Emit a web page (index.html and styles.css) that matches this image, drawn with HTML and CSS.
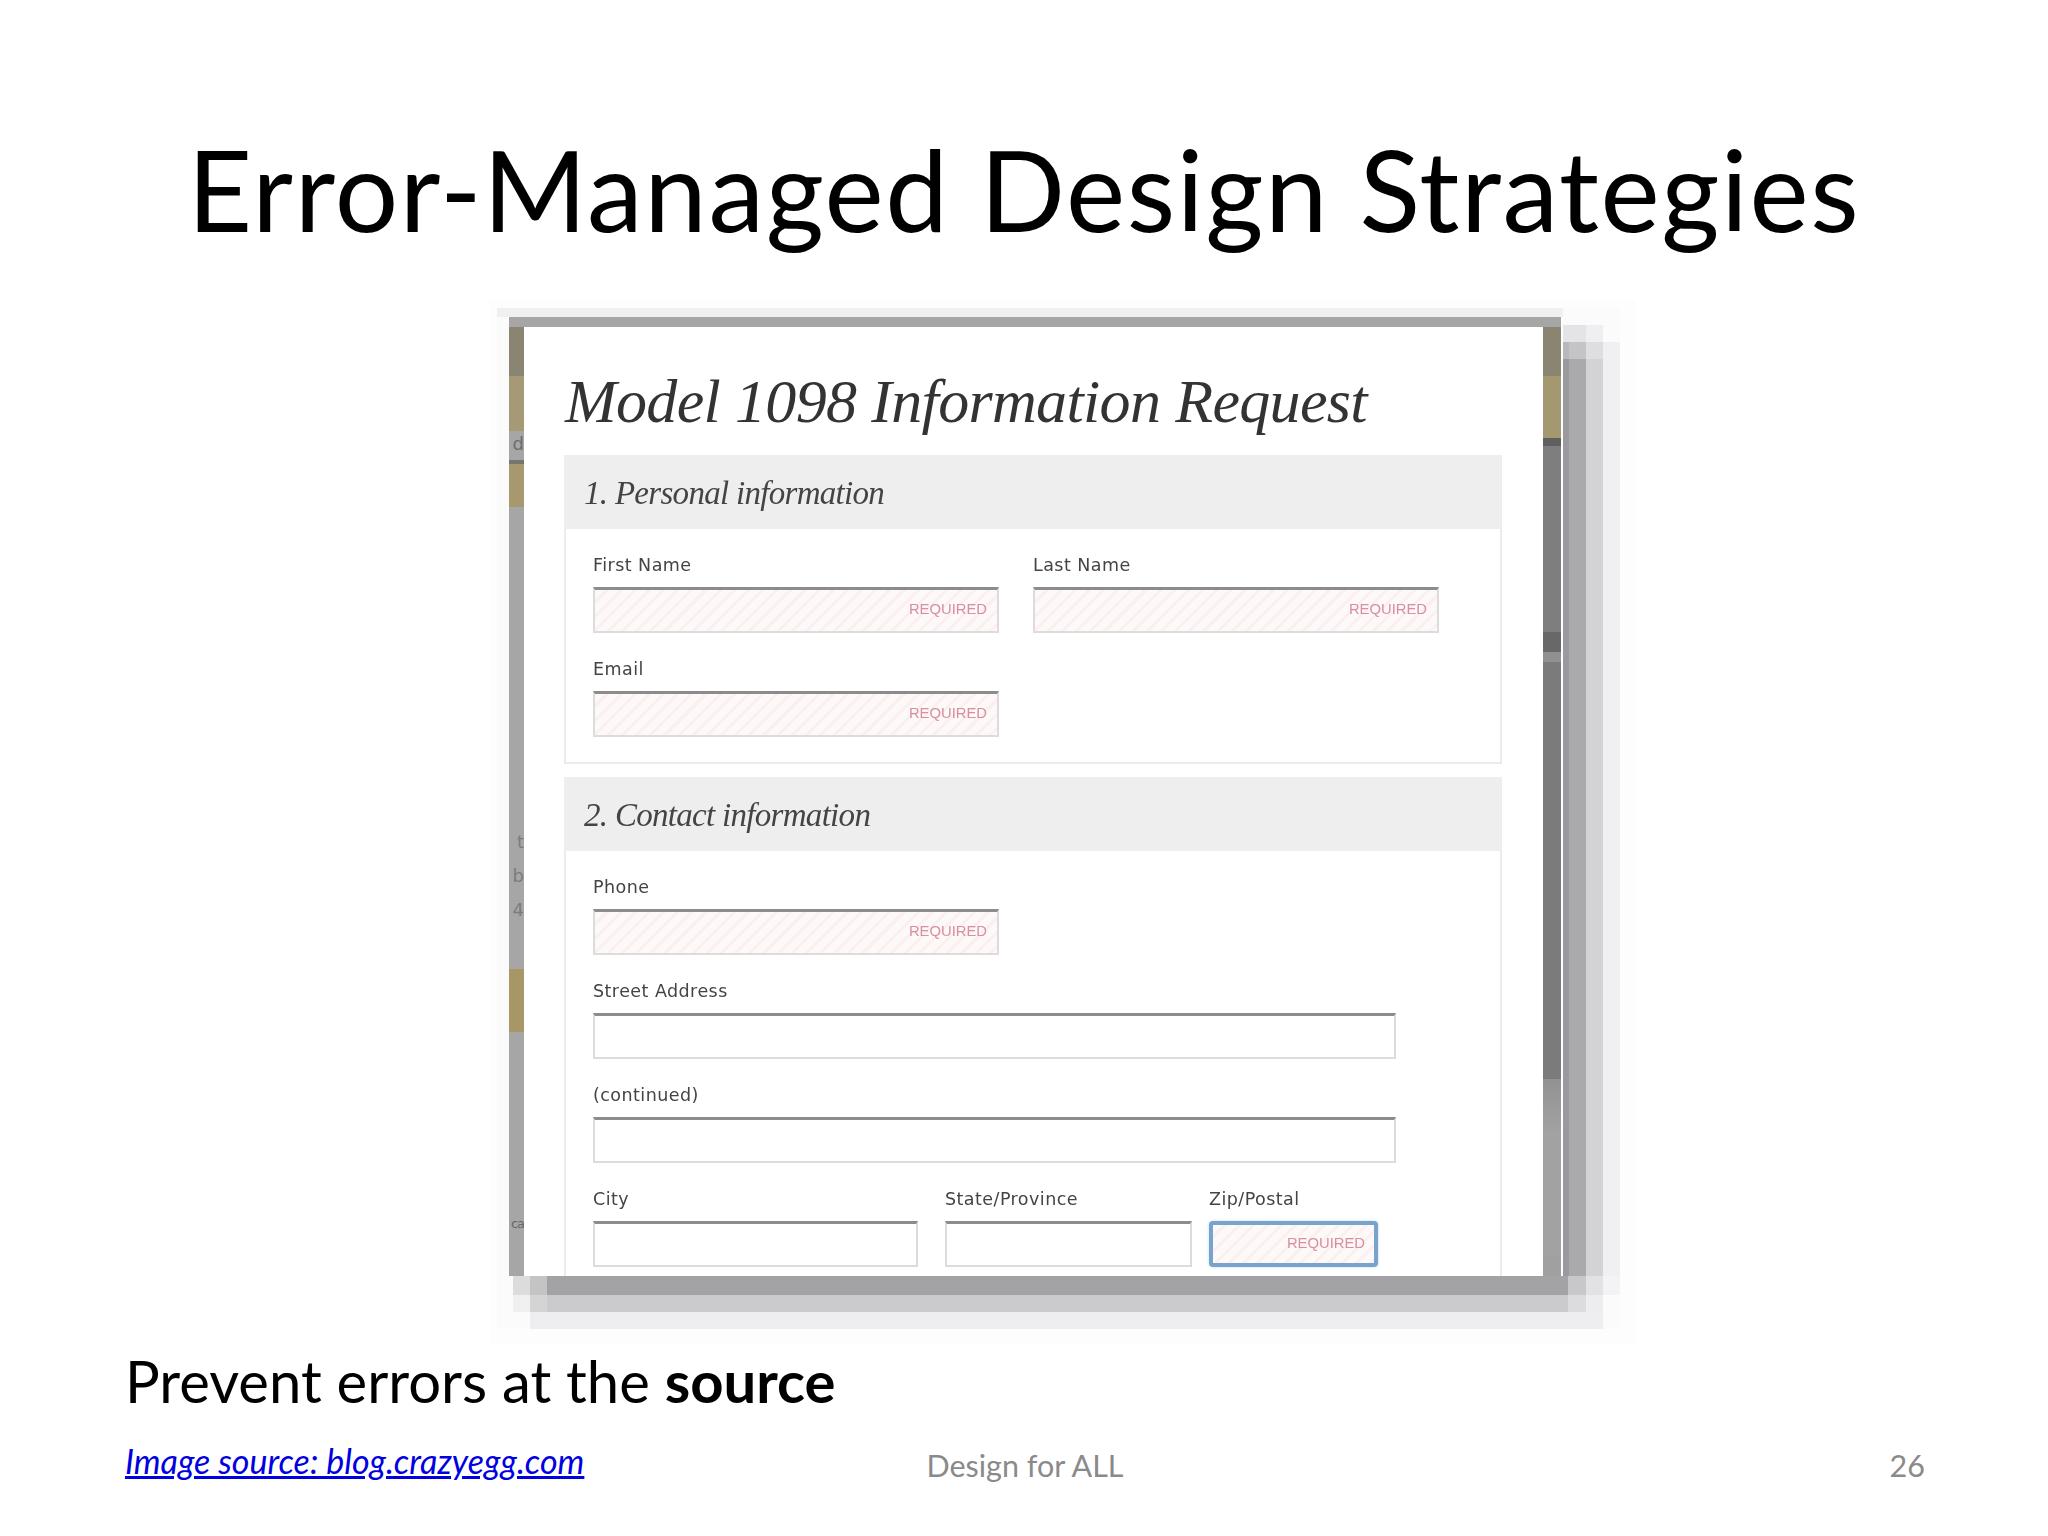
FILE: index.html
```html
<!DOCTYPE html>
<html lang="en">
<head>
<meta charset="utf-8">
<title>Error-Managed Design Strategies</title>
<link rel="stylesheet" href="styles.css">
</head>
<body>
<main class="slide">
  <h1 class="slide-title">Error-Managed Design Strategies</h1>
  <div class="shot">
    <svg class="shot-shadow" viewBox="480 290 1170 1070" width="1170" height="1070" aria-hidden="true">
      <rect x="490" y="300" width="1146" height="1045" fill="#fdfdfe"/>
      <rect x="497" y="308" width="1123" height="1021" fill="#fbfbfc"/>
      <rect x="497" y="308" width="1066" height="9" fill="#f0f0f1"/>
      <rect x="513" y="1276" width="1090" height="36" fill="#f0f0f1"/>
      <rect x="513" y="1276" width="17" height="19" fill="#dcdcdd"/>
      <rect x="530" y="1276" width="17" height="19" fill="#c4c4c5"/>
      <rect x="530" y="1295" width="17" height="17" fill="#d4d4d5"/>
      <rect x="530" y="1312" width="1073" height="17" fill="#eeeef0"/>
      <rect x="547" y="1295" width="1021" height="17" fill="#cbcbcd"/>
      <rect x="547" y="1276" width="1021" height="19" fill="#a3a3a5"/>
      <rect x="1568" y="1295" width="18" height="17" fill="#dcdcde"/>
      <rect x="1586" y="1295" width="17" height="17" fill="#ededef"/>
      <rect x="1568" y="1276" width="18" height="19" fill="#c8c8ca"/>
      <rect x="1586" y="1276" width="17" height="19" fill="#e2e2e4"/>
      <rect x="1603" y="1276" width="17" height="19" fill="#f3f3f5"/>
      <rect x="1603" y="342" width="17" height="934" fill="#f0f0f2"/>
      <rect x="1586" y="359" width="17" height="917" fill="#d3d3d6"/>
      <rect x="1569" y="359" width="17" height="917" fill="#aaaaad"/>
      <rect x="1563" y="359" width="6" height="917" fill="#9a9a9e"/>
      <rect x="1563" y="325" width="23" height="17" fill="#e4e4e6"/>
      <rect x="1586" y="325" width="17" height="17" fill="#efeff1"/>
      <rect x="1563" y="342" width="6" height="17" fill="#b8b8ba"/>
      <rect x="1569" y="342" width="17" height="17" fill="#c4c4c6"/>
      <rect x="1586" y="342" width="17" height="17" fill="#dedee0"/>
      <rect x="1561" y="317" width="2" height="959" fill="#ffffff"/>
    </svg>
    <div class="shot-frame">
      <div class="shot-top"></div>
      <div class="shot-row">
        <div class="strip">
          <div class="seg seg-olive"></div>
          <div class="seg seg-tan"></div>
          <div class="seg seg-d">d</div>
          <div class="seg seg-rule"></div>
          <div class="seg seg-gold"></div>
          <div class="seg seg-letters"><span>t</span><span>b</span><span>4</span></div>
          <div class="seg seg-gold2"></div>
          <div class="seg seg-ca">ca</div>
        </div>
        <div class="form">
          <h2 class="form-title">Model 1098 Information Request</h2>
          <section class="group">
            <h3 class="group-head">1. Personal information</h3>
            <div class="group-body">
              <div class="fields">
                <div class="field"><span class="label">First Name</span><div class="input input-req input-half"><span>REQUIRED</span></div></div>
                <div class="field"><span class="label">Last Name</span><div class="input input-req input-half"><span>REQUIRED</span></div></div>
              </div>
              <div class="field"><span class="label">Email</span><div class="input input-req input-half"><span>REQUIRED</span></div></div>
            </div>
          </section>
          <section class="group group-open">
            <h3 class="group-head">2. Contact information</h3>
            <div class="group-body">
              <div class="field"><span class="label">Phone</span><div class="input input-req input-half"><span>REQUIRED</span></div></div>
              <div class="field"><span class="label">Street Address</span><div class="input input-full"></div></div>
              <div class="field"><span class="label">(continued)</span><div class="input input-full"></div></div>
              <div class="fields fields-city">
                <div class="field"><span class="label">City</span><div class="input input-city"></div></div>
                <div class="field"><span class="label">State/Province</span><div class="input input-state"></div></div>
                <div class="field"><span class="label">Zip/Postal</span><div class="input input-req input-zip"><span>REQUIRED</span></div></div>
              </div>
            </div>
          </section>
        </div>
        <div class="strip strip-right">
          <div class="seg seg-olive"></div>
          <div class="seg seg-tan-r"></div>
          <div class="seg seg-dark"></div>
          <div class="seg seg-mid"></div>
          <div class="seg seg-dark2"></div>
          <div class="seg seg-light"></div>
          <div class="seg seg-mid2"></div>
          <div class="seg seg-low"></div>
        </div>
      </div>
    </div>
  </div>
  <p class="caption">Prevent errors at the <strong>source</strong></p>
  <footer class="foot">
    <a class="foot-source" href="#">Image source: blog.crazyegg.com</a>
    <span class="foot-center">Design for ALL</span>
    <span class="foot-num">26</span>
  </footer>
</main>
</body>
</html>
```
FILE: styles.css
```css
* { box-sizing: border-box; }
html, body { margin: 0; padding: 0; background: #fff; }
.slide {
  width: 2048px;
  height: 1536px;
  overflow: hidden;
  font-family: Lato, "Open Sans", sans-serif;
  color: #000;
}
.slide-title {
  margin: 0;
  padding-top: 119px;
  height: 317px;
  font-size: 112px;
  letter-spacing: 1.6px;
  line-height: 140px;
  font-weight: 400;
  text-align: center;
}
.shot {
  position: relative;
  width: 1052px;
  height: 959px;
  margin-left: 509px;
}
.shot-shadow {
  position: absolute;
  left: -29px;
  top: -27px;
}
.shot-frame {
  position: relative;
  width: 100%;
  height: 959px;
  overflow: hidden;
  background: #fff;
  display: flex;
  flex-direction: column;
}
.shot-top { height: 10px; flex: none; background: #a6a6a6; }
.shot-row { flex: 1; display: flex; min-height: 0; filter: blur(0.7px); }

.strip {
  width: 15px;
  flex: none;
  display: flex;
  flex-direction: column;
  overflow: hidden;
  background: #a6a6a6;
  font-family: "DejaVu Sans", sans-serif;
  font-size: 18px;
  color: #6c6c6c;
}
.strip-right { width: 18px; background: #a0a0a0; }
.seg { flex: none; text-align: right; white-space: nowrap; }
.seg-olive { height: 49px; background: #8a8570; }
.seg-tan { height: 55px; background: #a59a75; }
.seg-d { height: 29px; line-height: 26px; }
.seg-rule { height: 4px; background: #77756c; }
.seg-gold { height: 43px; background: #a7986f; }
.seg-letters {
  height: 462px;
  padding-top: 318px;
  display: flex;
  flex-direction: column;
  align-items: flex-end;
  line-height: 34px;
  color: #7c7c7c;
}
.seg-gold2 { height: 63px; background: #a89766; }
.seg-ca {
  padding-top: 180px;
  font-size: 13px;
  letter-spacing: -1px;
  line-height: 24px;
  color: #666;
}
.seg-tan-r { height: 62px; background: #a3986f; }
.seg-dark { height: 8px; background: #5f5f5f; }
.seg-mid { height: 186px; background: #7e7e7e; }
.seg-dark2 { height: 20px; background: #686868; }
.seg-light { height: 10px; background: #909090; }
.seg-mid2 { height: 417px; background: #7b7b7b; }
.seg-low { height: 178px; background: linear-gradient(#929292, #a2a2a2 30%); }

.form { flex: 1; min-width: 0; padding: 0 41px 0 40px; }
.form-title {
  margin: 0;
  height: 128px;
  padding: 38px 0 0 1px;
  font-family: "Liberation Serif", serif;
  font-style: italic;
  font-weight: 400;
  font-size: 62px;
  letter-spacing: -0.65px;
  line-height: 72px;
  color: #333;
  white-space: nowrap;
}
.group {
  border: 2px solid #ebebeb;
  margin-bottom: 13px;
  height: 309px;
}
.group-open { height: 520px; margin-bottom: 0; border-bottom: 0; }
.group-head {
  margin: -2px -2px 0;
  height: 74px;
  padding: 1px 0 0 20px;
  background: #eeeeef;
  font-family: "Liberation Serif", serif;
  font-style: italic;
  font-weight: 400;
  font-size: 33px;
  letter-spacing: -0.7px;
  line-height: 74px;
  color: #444;
  white-space: nowrap;
}
.group-body { padding: 24px 0 0 27px; }
.fields { display: flex; gap: 34px; }
.fields-city { gap: 27px; }
.fields-city .field:last-child { margin-left: -10px; }
.field { display: flex; flex-direction: column; margin-bottom: 24px; }
.label {
  height: 24px;
  margin-bottom: 10px;
  font-family: "DejaVu Sans", sans-serif;
  font-size: 17.5px;
  letter-spacing: 0.45px;
  line-height: 24px;
  color: #444;
  white-space: nowrap;
}
.input {
  height: 46px;
  background: #fff;
  border: 2px solid #dcdcdc;
  border-top: 3px solid #8c8c8c;
  display: flex;
  align-items: center;
  justify-content: flex-end;
  padding: 0 10px 3px 0;
  font-family: "Liberation Sans", sans-serif;
  font-size: 14.8px;
  color: #d88f9f;
}
.input-req {
  background: repeating-linear-gradient(135deg, #fdf9f9 0 7px, #fbefef 7px 10px);
}
.input-half { width: 406px; }
.input-full { width: 803px; }
.input-city { width: 325px; }
.input-state { width: 247px; }
.input-zip {
  width: 169px;
  border: 4px solid #77a3cc;
  border-radius: 4px;
  padding: 0 9px 2px 0;
  box-shadow: 0 0 3px #b9dcf5;
}

.caption {
  margin: 0;
  padding: 69px 0 0 125px;
  height: 161px;
  font-size: 58px;
  line-height: 72px;
}
.caption strong { font-weight: 700; }
.foot {
  display: grid;
  grid-template-columns: 1fr auto 1fr;
  align-items: start;
  padding: 0 123px 0 125px;
  font-size: 30.5px;
  line-height: 56px;
}
.foot-source {
  margin-top: 2px;
  color: #0000e0;
  font-style: italic;
  font-size: 34px;
  line-height: 44px;
}
.foot-center, .foot-num { color: #8a8a8a; }
.foot-num { text-align: right; }
```
